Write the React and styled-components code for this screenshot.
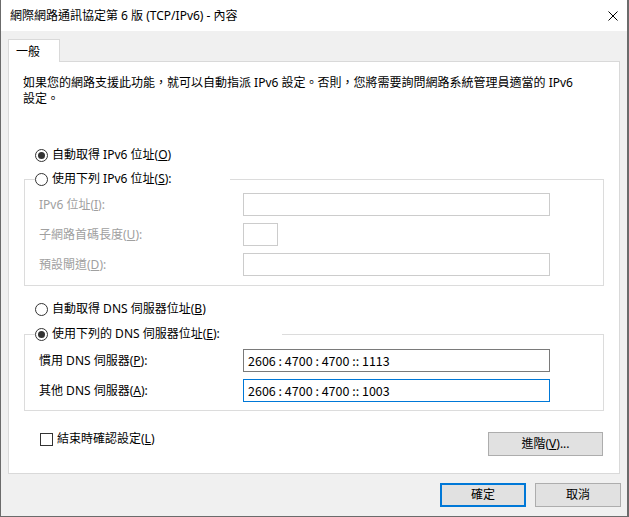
import React from 'react'
import styled, { createGlobalStyle } from 'styled-components'

const GlobalStyle = createGlobalStyle`
  html, body {
    margin: 0;
    padding: 0;
    background: #6b6b6b;
  }
  body {
    font-family: "Noto Sans", "Noto Sans CJK TC", sans-serif;
    font-size: 12px;
    line-height: 16px;
    color: #000;
  }
`

const Window = styled.div`
  width: 629px;
  height: 517px;
  box-sizing: border-box;
  display: flex;
  flex-direction: column;
  background: #f0f0f0;
  border: 1px solid #6b6b6b;
  border-top: none;
  border-right-width: 2px;
`

const TitleBar = styled.div`
  height: 31px;
  flex: none;
  display: flex;
  align-items: center;
  justify-content: space-between;
  padding: 0 9px 0 9px;
  background: #fff;
`

const Title = styled.span`
  white-space: nowrap;
`

const Body = styled.div`
  flex: 1;
  display: flex;
  flex-direction: column;
  padding: 8px 6px 9px 7px;
`

const TabStrip = styled.div`
  display: flex;
`

const Tab = styled.div`
  position: relative;
  z-index: 1;
  width: 52px;
  height: 23px;
  box-sizing: border-box;
  margin-bottom: -1px;
  padding: 4px 0 0 7px;
  background: #fff;
  border: 1px solid #d9d9d9;
  border-bottom: none;
`

const Panel = styled.div`
  height: 413px;
  box-sizing: border-box;
  margin-right: 1px;
  display: flex;
  flex-direction: column;
  padding: 13px 15px 0 14px;
  background: #fff;
  border: 1px solid #d9d9d9;
`

const Description = styled.p`
  margin: 0;
  white-space: nowrap;
`

const OptionRow = styled.label`
  display: flex;
  align-items: center;
  height: 16px;
  margin: ${({top}) => top || 0}px 0 0 12px;
  white-space: nowrap;
`

const Mark = styled.svg`
  flex: none;
  margin-right: 4px;
`

const GroupBox = styled.fieldset`
  width: 580px;
  box-sizing: border-box;
  min-inline-size: 0;
  margin: ${({top}) => top}px 0 0 1px;
  padding: ${({padTop}) => padTop}px 0 ${({padBottom}) => padBottom}px 10px;
  border: 1px solid #dcdcdc;
`

const Legend = styled.legend`
  width: ${({width}) => width}px;
  height: 16px;
  box-sizing: border-box;
  padding: 0;
  margin: 0;
  display: flex;
  align-items: center;
  white-space: nowrap;
`

const Fields = styled.div`
  display: grid;
  grid-template-columns: 208px auto;
  row-gap: 7px;
  align-items: center;
`

const FieldLabel = styled.span`
  padding-left: 4px;
  color: ${({disabled}) => disabled ? '#a0a0a0' : '#000'};
  white-space: nowrap;
`

const TextBox = styled.div`
  width: ${({width}) => width}px;
  height: 23px;
  box-sizing: border-box;
  display: flex;
  align-items: center;
  padding-left: 4px;
  font-family: "Noto Sans CJK TC", "Noto Sans", sans-serif;
  font-size: 12.5px;
  background: #fff;
  border: 1px solid ${({state}) =>
    state === 'disabled' ? '#cccccc' : state === 'focus' ? '#0078d7' : '#7a7a7a'};
  white-space: nowrap;
`

const PanelFooter = styled.div`
  display: flex;
  justify-content: space-between;
  align-items: flex-start;
  margin-top: 21px;
`

const CheckRow = styled.label`
  display: flex;
  align-items: center;
  height: 14px;
  margin-left: 17px;
  white-space: nowrap;
`

const Button = styled.button`
  width: ${({width}) => width}px;
  height: 24px;
  box-sizing: border-box;
  padding: 0;
  margin: 0;
  font: inherit;
  line-height: 16px;
  color: #000;
  background: #e1e1e1;
  border: ${({primary}) => primary ? '2px solid #0078d7' : '1px solid #adadad'};
`

const DialogButtons = styled.div`
  display: flex;
  justify-content: flex-end;
  gap: 9px;
  margin-top: 9px;
`

const Radio = ({ checked }) => (
  <Mark width="13" height="13" viewBox="0 0 13 13">
    <circle cx="6.5" cy="6.5" r="6" fill="#fff" stroke="#333" strokeWidth="1" />
    {checked && <circle cx="6.5" cy="6.5" r="3.5" fill="#333" />}
  </Mark>
)

const Checkbox = () => (
  <Mark width="13" height="13" viewBox="0 0 13 13">
    <rect x="0.5" y="0.5" width="12" height="12" fill="#fff" stroke="#333" strokeWidth="1" />
  </Mark>
)

const CloseIcon = () => (
  <svg width="10" height="10" viewBox="0 0 10 10">
    <path d="M0.5 0.5 L9.5 9.5 M9.5 0.5 L0.5 9.5" stroke="#000" strokeWidth="1" fill="none" />
  </svg>
)

const dns = [
  { label: <>慣用 DNS 伺服器(<u>P</u>):</>, value: '2606 : 4700 : 4700 :: 1113', state: 'normal' },
  { label: <>其他 DNS 伺服器(<u>A</u>):</>, value: '2606 : 4700 : 4700 :: 1003', state: 'focus' },
]

export default function App() {
  return (
    <>
      <GlobalStyle />
      <Window>
        <TitleBar>
          <Title>網際網路通訊協定第 6 版 (TCP/IPv6) - 內容</Title>
          <CloseIcon />
        </TitleBar>
        <Body>
          <TabStrip>
            <Tab>一般</Tab>
          </TabStrip>
          <Panel>
            <Description>
              如果您的網路支援此功能，就可以自動指派 IPv6 設定。否則，您將需要詢問網路系統管理員適當的 IPv6
              <br />
              設定。
            </Description>

            <OptionRow top={40}>
              <Radio checked />
              自動取得 IPv6 位址(<u>O</u>)
            </OptionRow>
            <GroupBox top={8} padTop={6} padBottom={9}>
              <Legend width={195}>
                <Radio />
                使用下列 IPv6 位址(<u>S</u>):
              </Legend>
              <Fields>
                <FieldLabel disabled>IPv6 位址(<u>I</u>):</FieldLabel>
                <TextBox width={307} state="disabled" />
                <FieldLabel disabled>子網路首碼長度(<u>U</u>):</FieldLabel>
                <TextBox width={35} state="disabled" />
                <FieldLabel disabled>預設閘道(<u>D</u>):</FieldLabel>
                <TextBox width={307} state="disabled" />
              </Fields>
            </GroupBox>

            <OptionRow top={15}>
              <Radio />
              自動取得 DNS 伺服器位址(<u>B</u>)
            </OptionRow>
            <GroupBox top={9} padTop={7} padBottom={8}>
              <Legend width={247}>
                <Radio checked />
                使用下列的 DNS 伺服器位址(<u>E</u>):
              </Legend>
              <Fields>
                {dns.map((d, i) => (
                  <React.Fragment key={i}>
                    <FieldLabel>{d.label}</FieldLabel>
                    <TextBox width={307} state={d.state}>{d.value}</TextBox>
                  </React.Fragment>
                ))}
              </Fields>
            </GroupBox>

            <PanelFooter>
              <CheckRow>
                <Checkbox />
                結束時確認設定(<u>L</u>)
              </CheckRow>
              <Button width={115} style={{ marginRight: 1 }}>進階(<u>V</u>)...</Button>
            </PanelFooter>
          </Panel>
          <DialogButtons>
            <Button width={86} primary>確定</Button>
            <Button width={86}>取消</Button>
          </DialogButtons>
        </Body>
      </Window>
    </>
  )
}
